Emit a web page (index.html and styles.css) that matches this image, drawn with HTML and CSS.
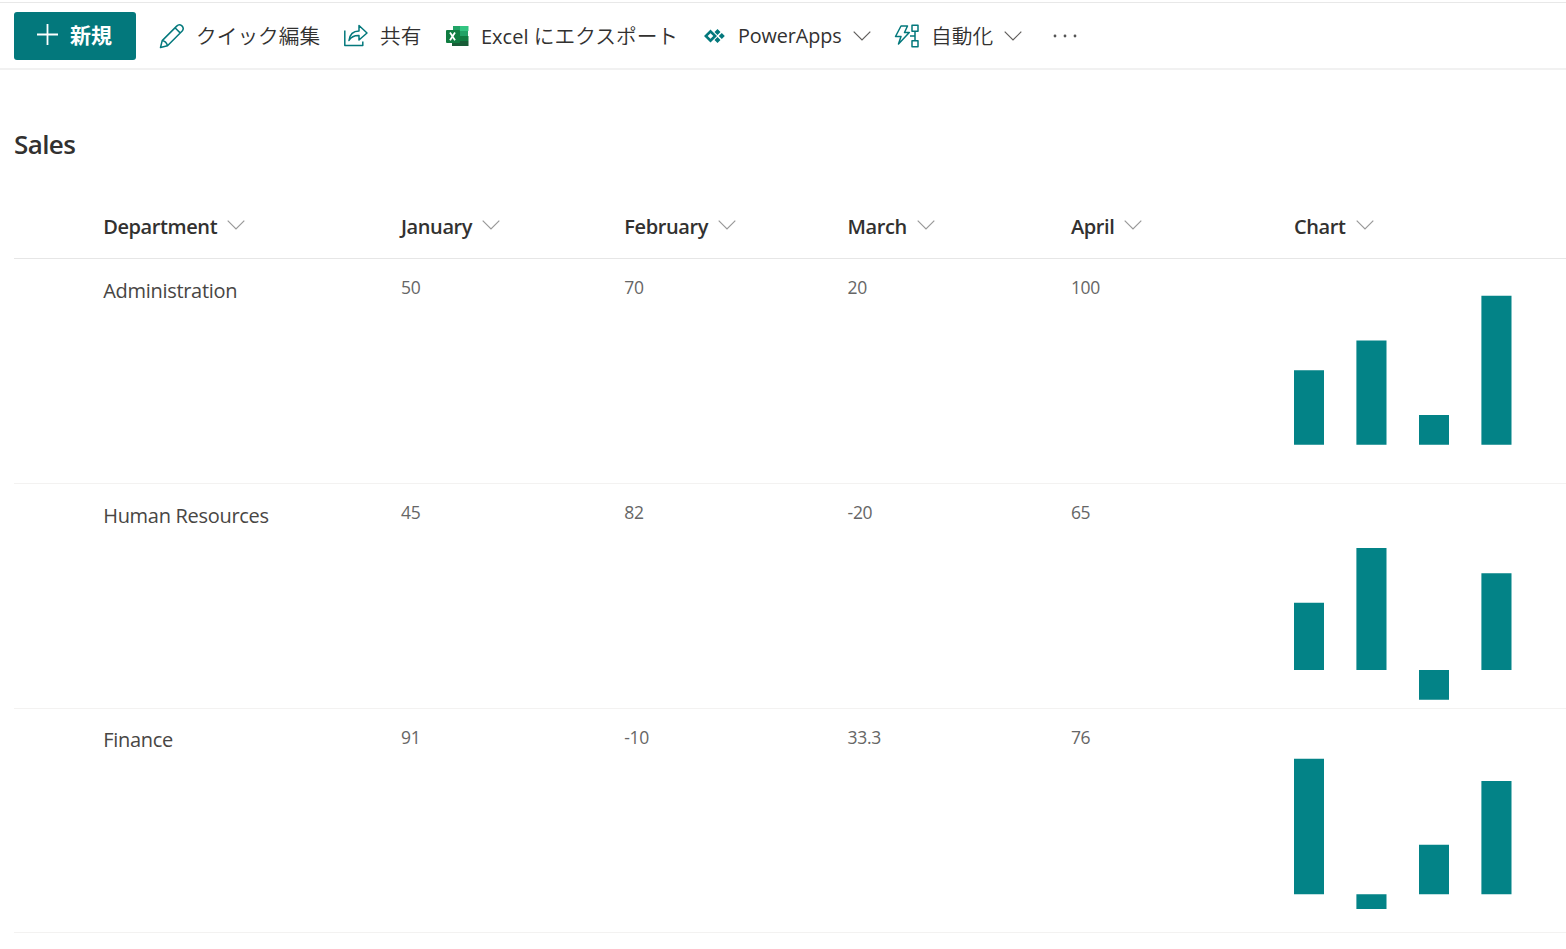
FILE: index.html
```html
<!DOCTYPE html>
<html lang="ja">
<head>
<meta charset="utf-8">
<title>Sales</title>
<link rel="stylesheet" href="styles.css">
</head>
<body>
<nav class="commands">
  <button class="new"><svg width="22" height="22" viewBox="0 0 22 22"><path d="M10.5 1v21M0 11.5h21" stroke="#fff" stroke-width="1.8"/></svg><span>新規</span></button>
  <button class="cmd edit"><svg class="icon" width="26" height="26" viewBox="0 0 26 26"><path d="M1.5 24.5L3.2 17.6L17.7 3.1Q20 .8 22.7 2.6Q25.5 5.2 23.2 8L8.5 22.7ZM3.2 17.6Q7.2 18.3 8.5 22.7M16 4.8L21.4 10.1"/></svg><span class="label">クイック編集</span></button>
  <button class="cmd share"><svg class="icon" width="26" height="26" viewBox="0 0 26 26"><path d="M1.8 7.5V22.5H19.8V18.5M6 17.5Q7.2 8 16 8V2.5L24 10L16 17V12.5Q9 12.3 6 17.5Z"/></svg><span class="label">共有</span></button>
  <button class="cmd excel"><svg width="24" height="22" viewBox="0 0 24 22"><path fill="#21a366" d="M7 1h15v20H7z"/><path fill="#33c481" d="M14 1h8.5v5H14z"/><path fill="#107c41" d="M14 11h8.5v5H14z"/><path fill="#185c37" d="M6 11h8v5h8.5v5H6z"/><path fill="#17864c" d="M6 6h8v5H6z"/><rect y="5" width="14" height="13" rx="1" fill="#107c41"/><path d="M4 7.5L9 15.3M9 7.5L4 15.3" stroke="#fff" stroke-width="1.8"/></svg><span class="label"><span class="latin">Excel</span> にエクスポート</span></button>
  <button class="cmd apps"><svg width="23" height="16" viewBox="0 0 23 16"><path fill="#03787c" fill-rule="evenodd" d="M1 8L7.5 1.5L14 8L7.5 14.5ZM4.7 8L7.5 10.8L10.3 8L7.5 5.2Z"/><path fill="#03787c" d="M11.5 4l3-3 3 3-3 3zM15.8 8l3-3 3 3-3 3zM11.5 12l3-3 3 3-3 3z"/></svg><span class="label">PowerApps</span><svg class="chev" width="18" height="10" viewBox="0 0 18 10"><path d="M.7.7L9 9L17.3.7"/></svg></button>
  <button class="cmd auto"><svg class="icon" width="26" height="26" viewBox="0 0 26 26"><path d="M7 3H13.5L10.5 9.5H15.3L4.5 21L7 13.5H1.5ZM18 2.2h6v6h-6zM18 17.7h6v6h-6zM21 8.2v9.5M21 13h-5"/></svg><span class="label">自動化</span><svg class="chev" width="18" height="10" viewBox="0 0 18 10"><path d="M.7.7L9 9L17.3.7"/></svg></button>
  <button class="cmd more" aria-label="その他"><svg width="24" height="4" viewBox="0 0 24 4" fill="#555"><circle cx="2" cy="2" r="1.4"/><circle cx="12" cy="2" r="1.4"/><circle cx="22" cy="2" r="1.4"/></svg></button>
</nav>
<main class="list">
  <h1 class="title">Sales</h1>
  <div class="row head">
    <div></div>
    <div class="column">Department<svg class="chev" width="18" height="10" viewBox="0 0 18 10"><path d="M.7.7L9 9L17.3.7"/></svg></div>
    <div class="column">January<svg class="chev" width="18" height="10" viewBox="0 0 18 10"><path d="M.7.7L9 9L17.3.7"/></svg></div>
    <div class="column">February<svg class="chev" width="18" height="10" viewBox="0 0 18 10"><path d="M.7.7L9 9L17.3.7"/></svg></div>
    <div class="column">March<svg class="chev" width="18" height="10" viewBox="0 0 18 10"><path d="M.7.7L9 9L17.3.7"/></svg></div>
    <div class="column">April<svg class="chev" width="18" height="10" viewBox="0 0 18 10"><path d="M.7.7L9 9L17.3.7"/></svg></div>
    <div class="column">Chart<svg class="chev" width="18" height="10" viewBox="0 0 18 10"><path d="M.7.7L9 9L17.3.7"/></svg></div>
  </div>
  <div class="row item">
    <div></div><div class="name">Administration</div><div class="num">50</div><div class="num">70</div><div class="num">20</div><div class="num">100</div>
    <svg class="chart" width="224" height="224" viewBox="0 0 224 224"><path d="M0 111.2h30v74.5H0zM62.4 81.4h30.1v104.3H62.4zM125 156h30v29.7h-30zM187.4 36.8h30.1v148.9h-30.1z"/></svg>
  </div>
  <div class="row item">
    <div></div><div class="name">Human Resources</div><div class="num">45</div><div class="num">82</div><div class="num">-20</div><div class="num">65</div>
    <svg class="chart" width="224" height="224" viewBox="0 0 224 224"><path d="M0 118.7h30V186H0zM62.4 63.9h30.1V186H62.4zM125 186h30v29.7h-30zM187.4 89.2h30.1V186h-30.1z"/></svg>
  </div>
  <div class="row item">
    <div></div><div class="name">Finance</div><div class="num">91</div><div class="num">-10</div><div class="num">33.3</div><div class="num">76</div>
    <svg class="chart" width="224" height="223" viewBox="0 0 224 223"><path d="M0 49.7h30v135.6H0zM62.4 185.3h30.1v14.8H62.4zM125 135.7h30v49.6h-30zM187.4 72.1h30.1v113.2h-30.1z"/></svg>
  </div>
</main>
</body>
</html>
```
FILE: styles.css
```css
* { box-sizing: border-box; }
body {
  margin: 0;
  padding-top: 2px;
  overflow: hidden;
  background: #fff;
  color: #323130;
  font-family: "Open Sans", "Noto Sans CJK JP", sans-serif;
}
button {
  border: 0;
  padding: 0;
  background: none;
  color: inherit;
  font: inherit;
}
svg { display: block; flex: none; }
.commands {
  display: flex;
  align-items: center;
  height: 68px;
  padding-left: 14px;
  border-top: 1px solid #e8e8e8;
  border-bottom: 2px solid #f1f1f1;
}
.new {
  display: flex;
  align-items: center;
  gap: 11px;
  width: 122px;
  height: 48px;
  margin-right: 23px;
  padding: 0 0 3px 23px;
  border-radius: 3px;
  background: #03787c;
  color: #fff;
  font-size: 21px;
  font-weight: 700;
  white-space: nowrap;
}
.cmd {
  display: flex;
  align-items: center;
  height: 48px;
  font-size: 20px;
  font-weight: 400;
  white-space: nowrap;
}
.label {
  padding-bottom: 2px;
  font-weight: 350;
  font-size: 20.7px;
}
.icon {
  fill: none;
  stroke: #03787c;
  stroke-width: 1.5;
  stroke-linejoin: round;
}
.chev { fill: none; stroke: #605e5c; stroke-width: 1.2; }
.edit { width: 184px; gap: 11px; }
.share { width: 103px; gap: 11px; }
.excel { width: 257px; gap: 11px; }
.excel .label { letter-spacing: 0; }
.latin { font-size: 20px; font-weight: 400; }
.apps { width: 191px; gap: 12px; }
.apps .label { width: 103px; padding-bottom: 0; font-size: 19.8px; font-weight: 400; letter-spacing: -.1px; }
.auto { width: 159px; gap: 11px; }
.list { padding-left: 14px; }
.title {
  height: 125px;
  margin: 0;
  padding-top: 56px;
  font-size: 26px;
  font-weight: 600;
  line-height: 36px;
  letter-spacing: -.6px;
}
.row {
  display: grid;
  grid-template-columns: 89.2px 297.8px 223.3px 223.3px 223.3px 223.1px 1fr;
}
.head { height: 64px; border-bottom: 1px solid #e6e6e6; }
.column {
  display: flex;
  align-items: center;
  gap: 10px;
  height: 64px;
  padding-bottom: 2px;
  font-size: 20px;
  font-weight: 600;
  letter-spacing: -.4px;
}
.column .chev { margin-bottom: 2px; stroke: #999; }
.item { height: 225px; border-bottom: 1px solid #f3f2f1; }
.item:last-child { height: 224px; }
.name {
  padding-top: 18px;
  color: #484644;
  font-size: 20px;
  line-height: 28px;
  letter-spacing: -.3px;
}
.item:last-child .name { padding-top: 17px; }
.num {
  padding-top: 15px;
  color: #666;
  font-size: 17.5px;
  line-height: 26px;
  letter-spacing: -.3px;
}
.chart { fill: #038387; }
```
